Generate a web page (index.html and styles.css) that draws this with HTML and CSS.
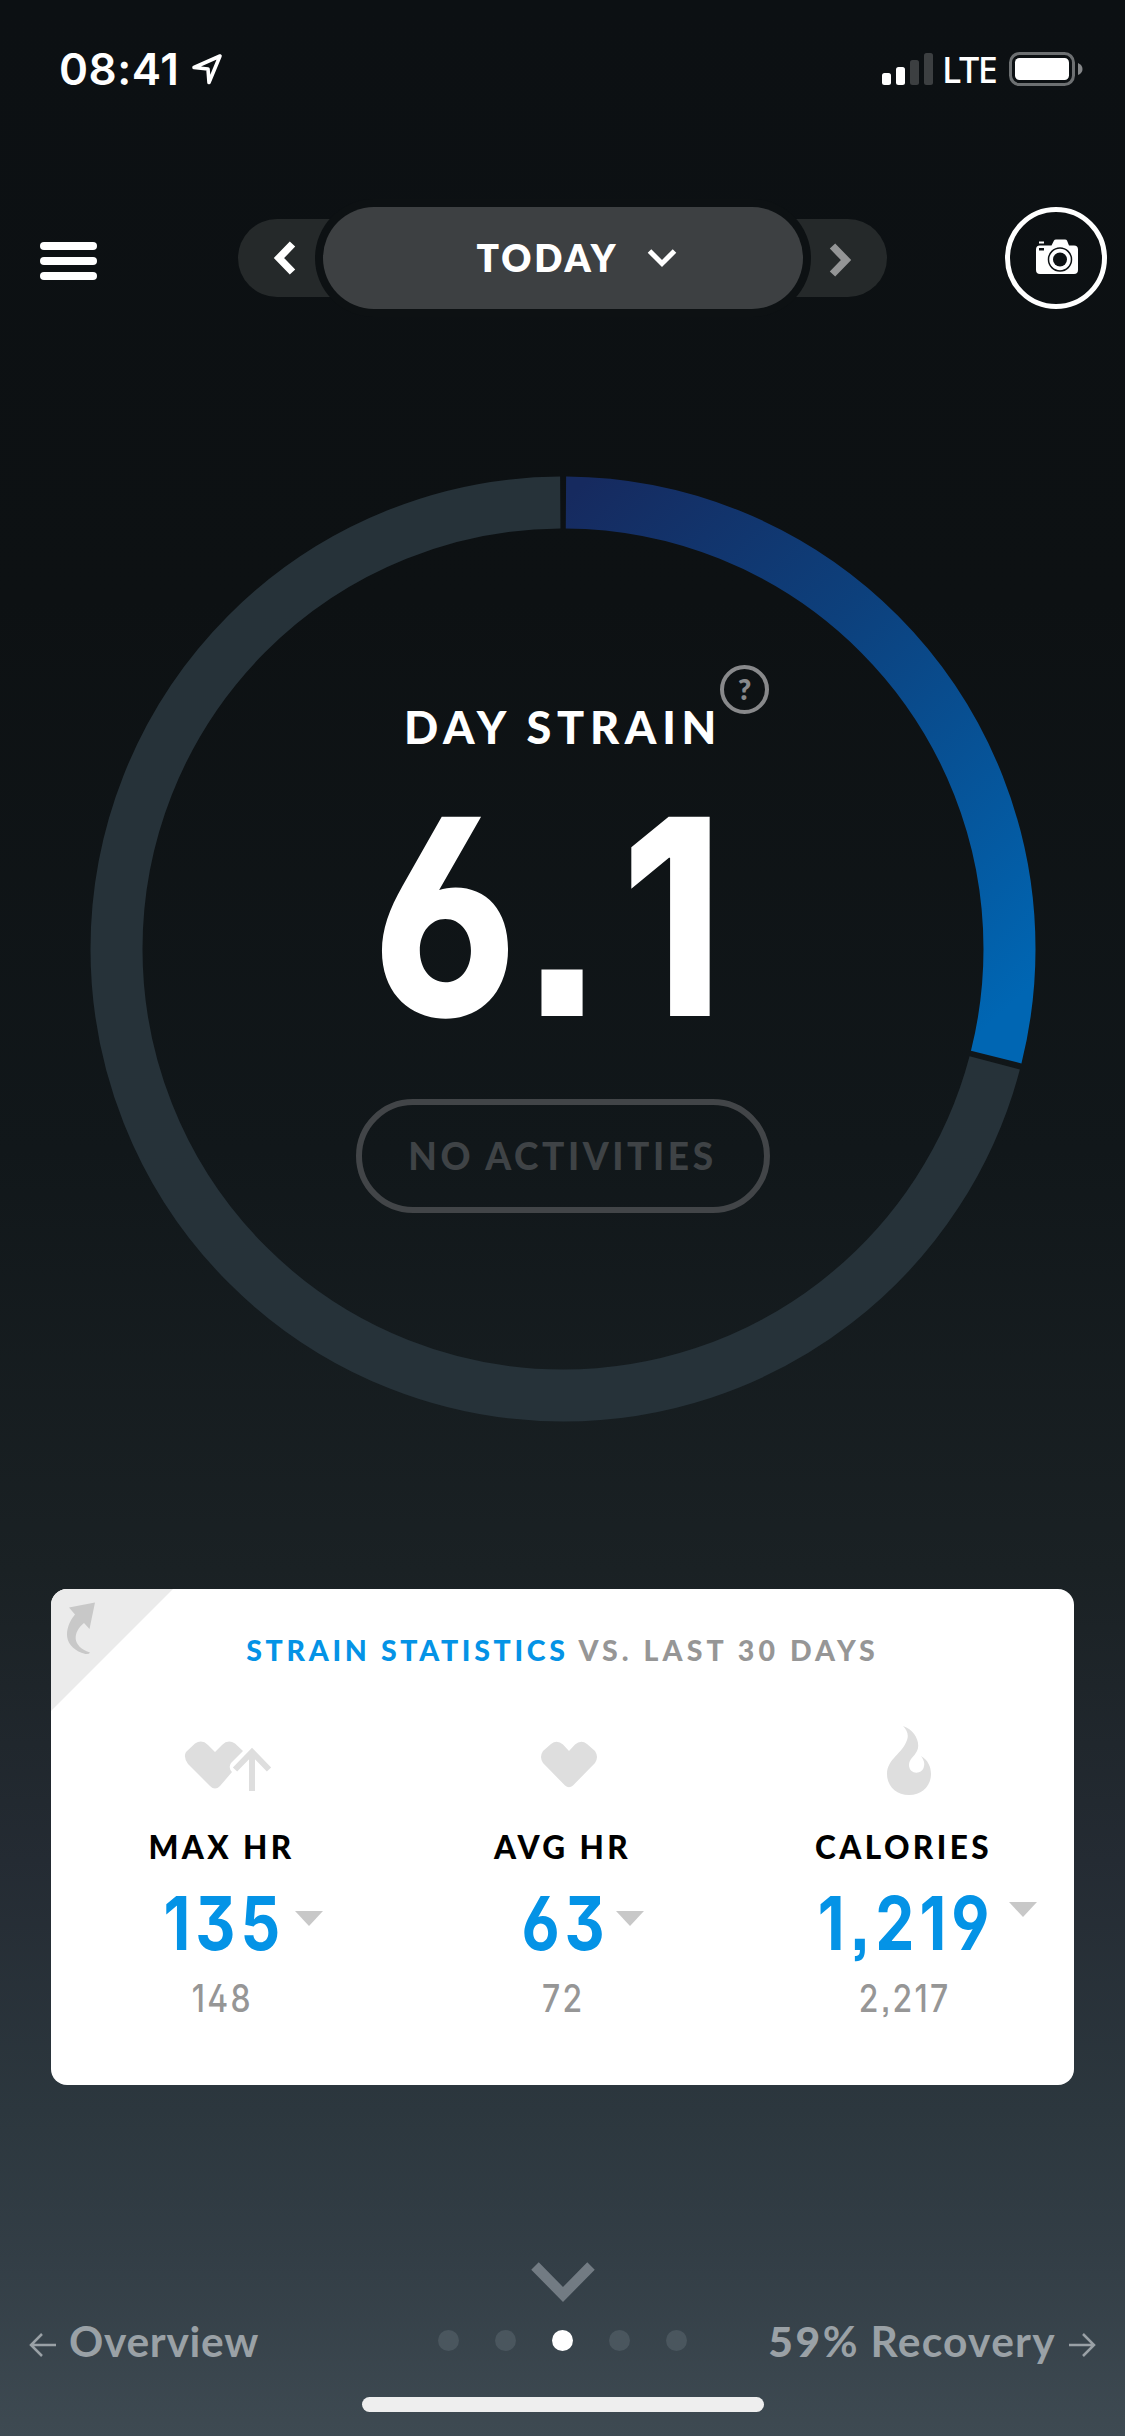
FILE: index.html
```html
<!DOCTYPE html>
<html lang="en">
<head>
    <meta charset="UTF-8">
    <meta name="viewport" content="width=device-width, initial-scale=1.0">
    <title>Day Strain</title>
    <link rel="stylesheet" href="styles.css">
</head>
<body>
    <!-- Status bar -->
    <div class="status-bar">
        <span class="time">08:41</span>
        <svg class="location" width="32" height="34" viewBox="0 0 32 34">
            <path d="M29 4 L3 15.500 L17 17 L18 30.500 Z" fill="none" stroke="#fff" stroke-width="3.600" stroke-linejoin="round"/>
        </svg>
        <div class="signal">
            <span class="bar bar1"></span>
            <span class="bar bar2"></span>
            <span class="bar bar3"></span>
            <span class="bar bar4"></span>
        </div>
        <span class="network">LTE</span>
        <svg width="74" height="34" viewBox="0 0 74 34">
            <rect x="1.500" y="1.500" width="63" height="31" rx="9" fill="none" stroke="#6d7072" stroke-width="3"/>
            <rect x="6" y="6" width="54" height="22" rx="4.500" fill="#fff"/>
            <path d="M69 11 Q73.500 13 73.500 17 Q73.500 21 69 23 Z" fill="#858789"/>
        </svg>
    </div>

    <!-- Menu, day picker and camera -->
    <div class="header">
        <div class="menu">
            <span></span>
            <span></span>
            <span></span>
        </div>
        <div class="day-picker">
            <div class="prev">
                <svg width="24" height="34" viewBox="0 0 24 34"><path d="M19.500 3 L6 17 L19.500 31" fill="none" stroke="#fff" stroke-width="7.500"/></svg>
            </div>
            <div class="today">
                <span>TODAY</span>
                <svg width="30" height="20" viewBox="0 0 30 20"><path d="M2.500 3 L15 15.500 L27.500 3" fill="none" stroke="#fff" stroke-width="5"/></svg>
            </div>
            <div class="next">
                <svg width="24" height="34" viewBox="0 0 24 34"><path d="M4.500 3 L18 17 L4.500 31" fill="none" stroke="#949596" stroke-width="7.500"/></svg>
            </div>
        </div>
        <div class="camera">
            <svg width="44" height="36" viewBox="0 0 44 36">
                <path d="M4 2.500 H9 V4.500 H4 Z" fill="#fff"/>
                <path d="M5 6.500 H16.500 L19 1.500 Q19.500 0.500 21 0.500 H30 Q31.500 0.500 32 1.500 L34 6.500 H39 Q43 6.500 43 10.500 V31 Q43 35 39 35 H5 Q1 35 1 31 V10.500 Q1 6.500 5 6.500 Z" fill="#fff"/>
                <rect x="4" y="9" width="5" height="2.500" fill="#0d1113"/>
                <circle cx="25" cy="20.500" r="11.500" fill="none" stroke="#0d1113" stroke-width="1.500"/>
                <circle cx="25" cy="20.500" r="7" fill="#0d1113"/>
            </svg>
        </div>
    </div>

    <!-- Strain ring -->
    <div class="ring">
        <svg class="ring-chart" width="946" height="946" viewBox="0 0 946 946">
            <defs>
                <linearGradient id="strain" gradientUnits="userSpaceOnUse" x1="920" y1="473" x2="426" y2="930">
                    <stop offset="0" stop-color="#162a5f"/>
                    <stop offset="0.400" stop-color="#0d407c"/>
                    <stop offset="1" stop-color="#0066b3"/>
                </linearGradient>
            </defs>
            <g fill="none" stroke-width="52" transform="rotate(-90 473 473)">
                <circle cx="473" cy="473" r="446.500" stroke="#263239" stroke-dasharray="0 816.500 1985.700 10"/>
                <circle cx="473" cy="473" r="446.500" stroke="url(#strain)" stroke-dasharray="0 3 807.500 3000"/>
            </g>
        </svg>
        <div class="ring-content">
            <div class="ring-title">
                <h1>DAY STRAIN</h1>
                <span class="help">?</span>
            </div>
            <div class="strain-value"><span class="narrow">6<span class="point">.</span>1</span></div>
            <div class="activities">NO ACTIVITIES</div>
        </div>
    </div>

    <!-- Statistics card -->
    <div class="card">
        <svg class="corner" width="122" height="122" viewBox="0 0 122 122">
            <path d="M0 0 H122 L0 122 Z" fill="#ebebeb"/>
            <path d="M18 18.500 L44 13.500 L38.500 40 L33 34 C22 43 20 57 39 63.500 Q38 65.500 34.500 65 C12 59 12 40 24 25.500 Z" fill="#c8c8c8"/>
        </svg>
        <h2><span class="blue">STRAIN STATISTICS</span> VS. LAST 30 DAYS</h2>
        <div class="stats">
            <div class="stat">
                <svg class="icon" width="90" height="72" viewBox="0 0 90 72">
                    <path d="M3 27 L12 18.500 Q19 14 25 20 L32 27 L39 20 Q45 14 52 18.500 L60 26 L48 38 Q45 43 49 47 L37 61 Q32 66 27 61 L5 39 Q0 32 3 27 Z" fill="#dedede"/>
                    <path d="M69 66 V29 M52 44.500 L69 27 L86 44.500" fill="none" stroke="#dedede" stroke-width="6"/>
                </svg>
                <div class="label">MAX HR</div>
                <div class="value"><span class="narrow">135</span><i class="down"></i></div>
                <div class="average"><span class="narrow">148</span></div>
            </div>
            <div class="stat">
                <svg class="icon" width="58" height="72" viewBox="0 0 58 72">
                    <path d="M3 26 L11 19 Q17 14.500 23 19.500 L29 26 L35 19.500 Q41 14.500 47 19 L55 26 Q59 32 55 38 L33 60.500 Q29 64 25 60.500 L3 38 Q-1 32 3 26 Z" fill="#dedede"/>
                </svg>
                <div class="label">AVG HR</div>
                <div class="value"><span class="narrow">63</span><i class="down"></i></div>
                <div class="average"><span class="narrow">72</span></div>
            </div>
            <div class="stat">
                <svg class="icon flame-icon" width="46" height="72" viewBox="0 0 46 72">
                    <path d="M17 1 C29 5 35 18 31 26 C28 32 23 34 23 40 C23 50 37 50 38 41 C39 37 37 34 35 31 C42 35 45 42 45 49 C45 61 36 70 23 70 C10 70 1 61 1 49 C1 34 17 28 21 15 C23 10 21 5 17 1 Z" fill="#dedede"/>
                </svg>
                <div class="label">CALORIES</div>
                <div class="value"><span class="narrow">1,219</span><i class="down high"></i></div>
                <div class="average"><span class="narrow">2,217</span></div>
            </div>
        </div>
    </div>

    <!-- Bottom navigation -->
    <div class="bottom">
        <svg width="64" height="40" viewBox="0 0 64 40"><path d="M4 4 L32 32.500 L60 4" fill="none" stroke="#727b83" stroke-width="10.500"/></svg>
        <div class="pager">
            <div class="page-link">
                <svg width="28" height="26" viewBox="0 0 28 26"><path d="M27 13 H2 M13 2 L2 13 L13 24" fill="none" stroke="#9aa1a6" stroke-width="2.500"/></svg>
                <span>Overview</span>
            </div>
            <div class="dots">
                <span></span>
                <span></span>
                <span class="active"></span>
                <span></span>
                <span></span>
            </div>
            <div class="page-link right">
                <span><b>59</b>% Recovery</span>
                <svg width="28" height="26" viewBox="0 0 28 26"><path d="M1 13 H26 M15 2 L26 13 L15 24" fill="none" stroke="#9aa1a6" stroke-width="2.500"/></svg>
            </div>
        </div>
        <div class="home-indicator"></div>
    </div>
</body>
</html>
```
FILE: styles.css
```css
* {
    box-sizing: border-box;
}

/* General styles for the body */
body {
    font-family: Lato, "Open Sans", sans-serif;
    margin: 0;
    width: 1125px;
    height: 2436px;
    display: flex;
    flex-direction: column;
    overflow: hidden;
    color: #fff;
    background: linear-gradient(#0c1013 0, #0d1113 600px, #11171a 1150px, #1a2124 1570px, #242b33 1860px, #2c373e 2110px, #333e46 2260px, #3e4a52 2436px);
}

svg {
    display: block;
    flex: none;
}

h1,
h2 {
    margin: 0;
    white-space: nowrap;
}

/* Status bar */
.status-bar {
    display: flex;
    align-items: center;
    height: 138px;
    padding: 0 42px 0 59px;
    font-family: Inter, sans-serif;
}

.time {
    font-size: 44px;
    font-weight: 600;
    letter-spacing: 0.5px;
    width: 132px;
}

.signal {
    display: flex;
    align-items: flex-end;
    gap: 5px;
    height: 32px;
    margin-left: auto;
}

.bar {
    width: 9px;
    border-radius: 2.5px;
    background: #fff;
}

.bar1 {
    height: 12px;
}

.bar2 {
    height: 18px;
}

.bar3 {
    height: 25px;
    background: #3c3f41;
}

.bar4 {
    height: 32px;
    background: #3c3f41;
}

.network {
    font-size: 36px;
    line-height: 40px;
    font-weight: 500;
    margin: 2px 14px 0 9px;
    letter-spacing: -1.5px;
    width: 53px;
    font-family: "Noto Sans", sans-serif;
}

/* Header row */
.header {
    display: flex;
    align-items: center;
    justify-content: space-between;
    height: 102px;
    margin-top: 69px;
    padding: 0 18px 0 40px;
}

.menu {
    display: flex;
    flex-direction: column;
    gap: 7px;
    margin-top: 6px;
    width: 57px;
}

.menu span {
    height: 8px;
    border-radius: 4px;
    background: #fff;
}

.day-picker {
    display: flex;
    align-items: center;
    margin-right: -22px;
}

.prev,
.next {
    display: flex;
    align-items: center;
    width: 134px;
    height: 78px;
    background: #25292a;
}

.prev {
    border-radius: 39px 0 0 39px;
    margin-right: -49px;
    padding-left: 35px;
}

.next {
    border-radius: 0 39px 39px 0;
    margin-left: -50px;
    justify-content: flex-end;
    padding: 4px 35px 0 0;
}

.today {
    position: relative;
    z-index: 1;
    display: flex;
    align-items: center;
    gap: 29px;
    width: 480px;
    height: 102px;
    padding-left: 154px;
    border-radius: 51px;
    background: #3d4042;
    box-shadow: 0 0 0 8px #0d1113;
    font-size: 37px;
    line-height: 44px;
    font-weight: 800;
    letter-spacing: 2.9px;
}

.camera {
    display: flex;
    align-items: center;
    justify-content: center;
    width: 102px;
    height: 102px;
    padding: 0 0 2px 2px;
    border: 5.5px solid #fff;
    border-radius: 50%;
}

/* Strain ring */
.ring {
    display: grid;
    justify-content: center;
    margin-top: 167px;
    height: 946px;
}

.ring-chart,
.ring-content {
    grid-area: 1 / 1;
}

.ring-content {
    display: flex;
    flex-direction: column;
    align-items: center;
}

.ring-title {
    display: flex;
    justify-content: center;
    margin-top: 189px;
    height: 90px;
    padding-left: 48px;
}

h1 {
    font-size: 45px;
    line-height: 54px;
    font-weight: 900;
    letter-spacing: 5.7px;
    margin-top: 35px;
    width: 316px;
}

.help {
    width: 49px;
    height: 49px;
    border: 4px solid #88898b;
    border-radius: 50%;
    color: #88898b;
    font-size: 28px;
    line-height: 40px;
    font-weight: 800;
    text-align: center;
}

/* Condensed numerals */
.narrow {
    display: inline-block;
    font-family: Inter, sans-serif;
    font-feature-settings: "ss01", "cv03", "cv04", "ss07";
    letter-spacing: 0.08em;
    transform: translateX(3px) scaleX(0.84);
}

.strain-value {
    font-size: 274px;
    line-height: 276px;
    font-weight: 800;
    margin: 17px 31px 0 0;
    height: 327px;
}

.strain-value .narrow {
    letter-spacing: 5px;
}

.strain-value .point {
    letter-spacing: 22px;
}

.activities {
    width: 414px;
    height: 114px;
    border: 6px solid #424548;
    border-radius: 57px;
    color: #3f4346;
    font-size: 37px;
    line-height: 102px;
    font-weight: 900;
    letter-spacing: 3.6px;
    text-align: center;
    white-space: nowrap;
}

/* Statistics card */
.card {
    position: relative;
    width: 1023px;
    height: 496px;
    margin: 167px 0 0 51px;
    border-radius: 16px;
    background: #fff;
    overflow: hidden;
    color: #969696;
}

.corner {
    position: absolute;
    top: 0;
    left: 0;
}

h2 {
    padding-top: 43px;
    font-size: 28.5px;
    line-height: 36px;
    font-weight: 900;
    letter-spacing: 4.1px;
    text-align: center;
}

.blue {
    color: #0493e6;
    letter-spacing: 3.7px;
}

.stats {
    display: grid;
    grid-template-columns: 1fr 1fr 1fr;
    margin-top: 57px;
}

.stat {
    display: flex;
    flex-direction: column;
    align-items: center;
}

.icon {
    margin-left: 13px;
}

.flame-icon {
    margin-left: 11px;
}

.label {
    margin-top: 30px;
    font-size: 31.5px;
    line-height: 40px;
    font-weight: 900;
    letter-spacing: 3.4px;
    color: #000;
}

.value {
    display: grid;
    grid-template-columns: 1fr auto 1fr;
    width: 100%;
    height: 88px;
    margin-top: 10px;
    font-size: 74px;
    line-height: 92px;
    font-weight: 700;
    color: #0493e6;
}

.value .narrow {
    grid-column: 2;
}

.down {
    width: 0;
    height: 0;
    margin: 34px 0 0 1px;
    border: 14px solid transparent;
    border-top: 15px solid #c8c8c8;
    border-bottom: 0;
}

.high {
    margin-top: 25px;
    margin-left: 0;
}

.average {
    margin-top: 10px;
    font-size: 38px;
    line-height: 44px;
    font-weight: 500;
}

.average .narrow {
    letter-spacing: 0.07em;
    transform: translateX(1px) scaleX(0.84);
}

/* Bottom navigation */
.bottom {
    display: flex;
    flex-direction: column;
    align-items: center;
    margin-top: 177px;
}

.pager {
    display: grid;
    grid-template-columns: 1fr auto 1fr;
    align-items: center;
    width: 100%;
    height: 60px;
    margin-top: 8px;
    padding: 0 29px;
}

.page-link {
    display: flex;
    align-items: center;
    gap: 12px;
    color: #9aa1a6;
    font-size: 42.5px;
    font-weight: 700;
    letter-spacing: 0.7px;
    white-space: nowrap;
}

.page-link svg {
    margin-top: 10px;
}

.right {
    justify-content: flex-end;
    letter-spacing: 1.3px;
}

.page-link b {
    font-weight: 900;
    letter-spacing: 2.5px;
}

.dots {
    display: flex;
    gap: 36px;
}

.dots span {
    width: 21px;
    height: 21px;
    border-radius: 50%;
    background: #4a565e;
}

.dots .active {
    background: #fff;
}

.home-indicator {
    width: 402px;
    height: 15px;
    margin-top: 27px;
    border-radius: 8px;
    background: #eee;
}
```
